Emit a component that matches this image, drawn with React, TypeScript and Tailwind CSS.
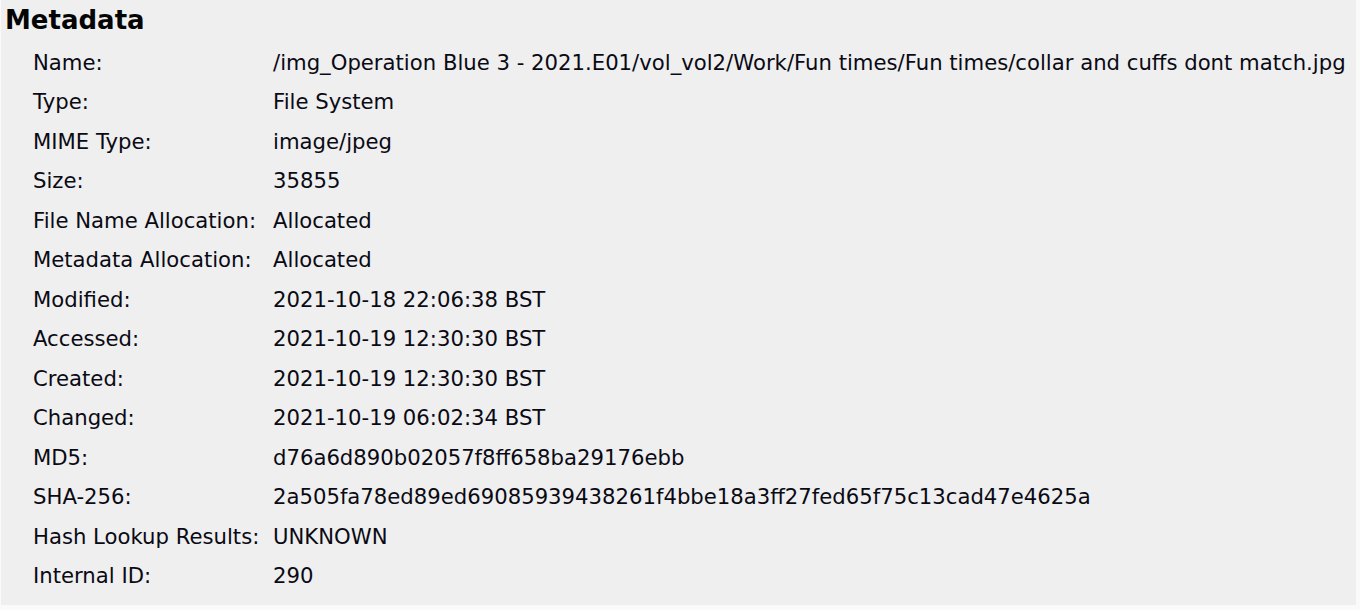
import React from "react";

const rows: [string, string][] = [
  ["Name:", "/img_Operation Blue 3 - 2021.E01/vol_vol2/Work/Fun times/Fun times/collar and cuffs dont match.jpg"],
  ["Type:", "File System"],
  ["MIME Type:", "image/jpeg"],
  ["Size:", "35855"],
  ["File Name Allocation:", "Allocated"],
  ["Metadata Allocation:", "Allocated"],
  ["Modified:", "2021-10-18 22:06:38 BST"],
  ["Accessed:", "2021-10-19 12:30:30 BST"],
  ["Created:", "2021-10-19 12:30:30 BST"],
  ["Changed:", "2021-10-19 06:02:34 BST"],
  ["MD5:", "d76a6d890b02057f8ff658ba29176ebb"],
  ["SHA-256:", "2a505fa78ed89ed69085939438261f4bbe18a3ff27fed65f75c13cad47e4625a"],
  ["Hash Lookup Results:", "UNKNOWN"],
  ["Internal ID:", "290"],
];

export default function App() {
  return (
    <div
      className="w-[1360px] h-[610px] bg-[#fafafa] overflow-hidden"
      style={{ fontFamily: '"DejaVu Sans", "Liberation Sans", sans-serif' }}
    >
      <div className="w-[1355px] h-[605px] ml-[1px] bg-[#efefef] text-[#0a0a14] flex flex-col">
        <div className="h-[40px] flex items-center pl-[4px] text-[26px] font-bold text-[#050505]">
          Metadata
        </div>
        <div className="pt-[3px] pl-[32px] grid grid-cols-[240px_1fr] text-[21.2px]">
          {rows.map(([k, v]) => (
            <React.Fragment key={k}>
              <div className="h-[39.5px] flex items-center whitespace-nowrap">{k}</div>
              <div className="h-[39.5px] flex items-center whitespace-nowrap">{v}</div>
            </React.Fragment>
          ))}
        </div>
      </div>
    </div>
  );
}
